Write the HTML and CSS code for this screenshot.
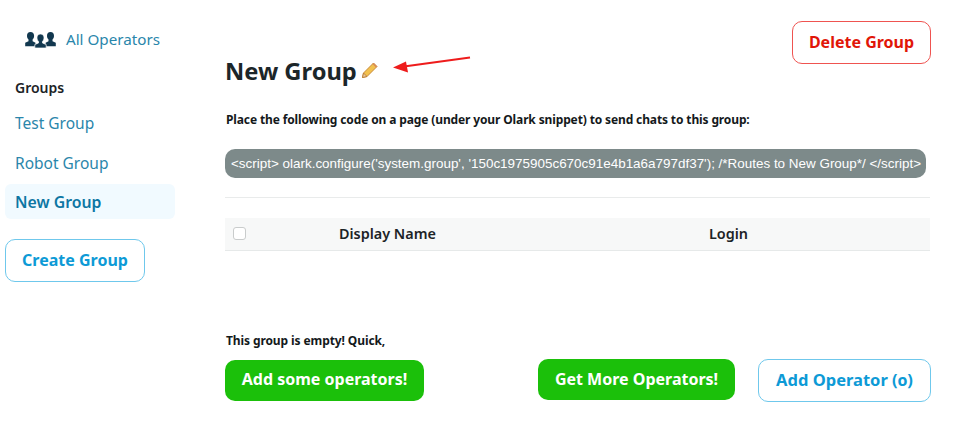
FILE: index.html
```html
<!DOCTYPE html>
<html lang="en">
<head>
<meta charset="utf-8">
<title>New Group</title>
<link rel="stylesheet" href="styles.css">
</head>
<body>
<div class="app">
  <nav class="sidebar">
    <a class="all-ops">
      <svg class="people" width="31" height="16" viewBox="0 0 31 16">
        <g fill="#12384f">
          <path d="M5.500 0c2.300 0 3.600 1.600 3.600 3.800 0 1.600-.6 2.900-1.500 3.700v1.800l2.900 1.400v3.600H.2v-3.500l3.300-1.500V7.500C2.600 6.700 2 5.400 2 3.800 2 1.600 3.200 0 5.500 0z"/>
          <path d="M25.500 0c2.300 0 3.500 1.600 3.500 3.800 0 1.600-.6 2.900-1.500 3.700v1.800l3.300 1.500v3.500H20.600v-3.600l2.900-1.400V7.500c-.9-.8-1.500-2.100-1.500-3.700C22 1.600 23.200 0 25.500 0z"/>
          <path d="M15.500 2c2.300 0 3.500 1.500 3.500 3.700 0 1.600-.6 2.900-1.500 3.700v1.600l3.700 1.500V16H9.800v-3.500l3.700-1.500V9.400c-.9-.8-1.500-2.100-1.500-3.700C12 3.500 13.200 2 15.500 2z" stroke="#fff" stroke-width=".7"/>
        </g>
      </svg>
      <span class="all-ops-label">All Operators</span>
    </a>
    <h2 class="groups-title">Groups</h2>
    <ul class="group-list">
      <li class="group-item">Test Group</li>
      <li class="group-item">Robot Group</li>
      <li class="group-item active">New Group</li>
    </ul>
    <button class="btn btn-outline create">Create Group</button>
  </nav>
  <main class="content">
    <div class="head">
      <div class="title-row">
        <h1 class="title">New Group</h1>
        <svg class="pencil" width="18" height="18" viewBox="0 0 18 18">
          <path d="M1.500 16.500l1-4.500L12.500 2l3.500 3.500L6 15.500z" fill="#f2c14e" stroke="#c98a3a" stroke-width="1"/>
          <path d="M1.500 16.500l1-4.500 3.500 3.500z" fill="#e9c9a0" stroke="#b5762f" stroke-width=".8"/>
          <path d="M11.500 3l3.500 3.500 1-1L12.500 2z" fill="#d9885a"/>
        </svg>
      </div>
      <button class="btn btn-danger">Delete Group</button>
      <svg class="arrow" width="80" height="20" viewBox="0 0 80 20">
        <path d="M78 1.500L12 10.500" stroke="#ee1c1c" stroke-width="2" fill="none"/>
        <path d="M1 11.500L14 5.500l2 11z" fill="#ee1c1c"/>
      </svg>
    </div>
    <p class="hint">Place the following code on a page (under your Olark snippet) to send chats to this group:</p>
    <div class="code">&lt;script&gt; olark.configure('system.group', '150c1975905c670c91e4b1a6a797df37'); /*Routes to New Group*/ &lt;/script&gt;</div>
    <hr class="rule">
    <div class="table-head">
      <span class="check"></span>
      <span class="col-name">Display Name</span>
      <span class="col-login">Login</span>
    </div>
    <p class="empty">This group is empty! Quick,</p>
    <div class="actions">
      <button class="btn btn-green add-some">Add some operators!</button>
      <div class="actions-right">
        <button class="btn btn-green get-more">Get More Operators!</button>
        <button class="btn btn-outline add-op">Add Operator (0)</button>
      </div>
    </div>
  </main>
</div>
</body>
</html>
```
FILE: styles.css
```css
* { box-sizing: border-box; }
html, body { margin: 0; padding: 0; background: #fff; }
body { font-family: "Noto Sans", "Open Sans", sans-serif; color: #1c2326; height: 425px; overflow: hidden; }
.app { display: flex; align-items: flex-start; padding-left: 5px; }

.sidebar { width: 170px; flex: none; padding-top: 28px; }
.all-ops { display: flex; align-items: center; gap: 10px; padding-left: 20px; height: 24px; color: #2a86ab; font-size: 15.200px; }
.all-ops-label { margin-top: -2px; }
.people { flex: none; }
.groups-title { margin: 26px 0 0; padding-left: 10px; font-size: 14px; line-height: 20px; font-weight: 600; color: #1c2326; }
.group-list { list-style: none; margin: 6px 0 0; padding: 0; }
.group-item { height: 35px; margin-bottom: 5px; padding-left: 10px; line-height: 39px; font-size: 15.500px; color: #2a86ab; border-radius: 6px; }
.group-item.active { background: #f1faff; color: #0d76a3; font-size: 15.800px; font-weight: 600; line-height: 37px; }
.btn { font-family: inherit; font-size: 16px; font-weight: 700; border-radius: 10px; background: #fff; padding: 0 0 2px; cursor: pointer; display: block; }
.btn-outline { border: 1px solid #6fc8ec; color: #0d9ad6; }
.btn-danger { border: 1px solid #ef5350; color: #e11608; width: 139px; height: 43px; flex: none; }
.btn-green { border: 0; background: #1bc00a; color: #fff; height: 41px; }
.create { width: 140px; height: 43px; margin-top: 20px; }

.content { width: 706px; margin-left: 50px; padding-top: 21px; }
.head { display: flex; justify-content: space-between; align-items: flex-start; position: relative; height: 75px; }
.title-row { display: flex; align-items: center; gap: 4px; margin-top: 32px; }
.title { margin: 0; font-size: 23.700px; line-height: 36px; font-weight: 700; color: #1c2629; }
.pencil { flex: none; margin-top: -2px; }
.arrow { position: absolute; left: 167px; top: 35px; }
.hint { margin: 14px 0 0; padding-left: 1px; font-size: 12px; letter-spacing: -0.130px; line-height: 20px; font-weight: 700; color: #14191b; }
.code { margin-top: 19px; width: 701px; height: 29px; line-height: 29px; padding-left: 6px; background: #7d8a8a; border-radius: 10px; color: #fff; font-family: "Liberation Sans", Arial, sans-serif; font-size: 13.440px; white-space: nowrap; overflow: hidden; }
.rule { margin: 19px 0 0; width: 705px; height: 1px; border: 0; background: #e9ebeb; }
.table-head { margin-top: 20px; padding-bottom: 2px; width: 705px; height: 33px; background: #f7f8f8; border-bottom: 1px solid #e6e9e9; display: grid; grid-template-columns: 114px 370px 1fr; align-items: center; font-size: 14.400px; font-weight: 600; color: #1c2326; }
.check { margin-left: 8px; width: 13px; height: 13px; border: 1px solid #c9cccc; border-radius: 3px; background: #fff; }
.col-name, .col-login { white-space: nowrap; }
.empty { margin: 80px 0 0; padding-left: 1px; font-size: 12px; letter-spacing: -0.100px; line-height: 20px; font-weight: 700; color: #14191b; }
.actions { display: flex; justify-content: space-between; align-items: flex-start; margin-top: 8px; }
.add-some { width: 199px; margin-top: 1px; padding-bottom: 4px; }
.actions-right { display: flex; gap: 23px; align-items: flex-start; }
.get-more { width: 197px; }
.add-op { width: 173px; height: 43px; font-size: 16.500px; font-variant-numeric: oldstyle-nums; }
```
